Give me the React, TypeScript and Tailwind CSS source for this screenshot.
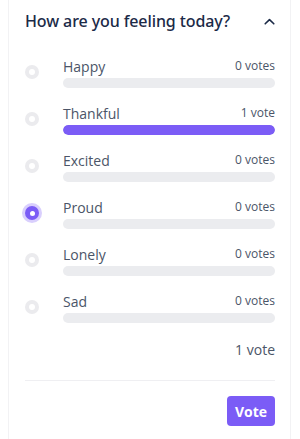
import React from "react";

const options = [
  { label: "Happy", votes: "0 votes", pct: 0, selected: false },
  { label: "Thankful", votes: "1 vote", pct: 100, selected: false },
  { label: "Excited", votes: "0 votes", pct: 0, selected: false },
  { label: "Proud", votes: "0 votes", pct: 0, selected: true },
  { label: "Lonely", votes: "0 votes", pct: 0, selected: false },
  { label: "Sad", votes: "0 votes", pct: 0, selected: false },
];

function Radio({ selected }: { selected: boolean }) {
  if (selected) {
    return (
      <div className="w-[14px] h-[14px] rounded-full bg-[#7b5cf6] ring-[3px] ring-[#d9cffd] flex items-center justify-center">
        <div className="w-[5px] h-[5px] rounded-full bg-white" />
      </div>
    );
  }
  return (
    <div className="w-[14px] h-[14px] rounded-full bg-[#ebebee] flex items-center justify-center">
      <div className="w-[6px] h-[6px] rounded-full bg-white" />
    </div>
  );
}

export default function App() {
  return (
    <div className="w-[300px] h-[439px] bg-white overflow-hidden" style={{ fontFamily: '"Open Sans", sans-serif' }}>
      <div className="ml-[8px] w-[283px] h-[439px] border-x border-[#f2f2f4] pl-[16px] pr-[15px] pt-[10px]">
        <div className="flex items-center justify-between h-[22px]">
          <div
            className="text-[16px] font-medium text-[#1b2a47] leading-[22px] tracking-[-0.1px]"
            style={{ fontFamily: '"Noto Sans", sans-serif' }}
          >
            How are you feeling today?
          </div>
          <svg width="11" height="7" viewBox="0 0 11 7" className="mr-[0px]">
            <path d="M1.2 5.8 L5.5 1.6 L9.8 5.8" fill="none" stroke="#1b2a47" strokeWidth="1.6" strokeLinecap="round" strokeLinejoin="round" />
          </svg>
        </div>
        <div className="mt-[24px] flex flex-col gap-[15px]">
          {options.map((o) => (
            <div key={o.label} className="flex items-center">
              <div className="w-[14px] mr-[24px] flex justify-center">
                <Radio selected={o.selected} />
              </div>
              <div className="flex-1">
                <div className="flex items-center justify-between h-[20px]">
                  <span className="text-[14px] text-[#4b5568]">{o.label}</span>
                  <span className="text-[12px] text-[#4b5568]">{o.votes}</span>
                </div>
                <div className="mt-[2px] h-[10px] rounded-full bg-[#ebecef] overflow-hidden">
                  <div className="h-full rounded-full bg-[#7b5cf6]" style={{ width: `${o.pct}%` }} />
                </div>
              </div>
            </div>
          ))}
        </div>
        <div className="mt-[16px] h-[20px] flex items-center justify-end text-[14px] text-[#4b5568]">1 vote</div>
        <div className="mt-[21px] h-px bg-[#efeff2]" />
        <div className="mt-[15px] flex justify-end">
          <button className="h-[30px] w-[48px] rounded-[4px] bg-[#7b5cf6] text-white text-[14px] font-bold flex items-center justify-center">
            Vote
          </button>
        </div>
      </div>
    </div>
  );
}
